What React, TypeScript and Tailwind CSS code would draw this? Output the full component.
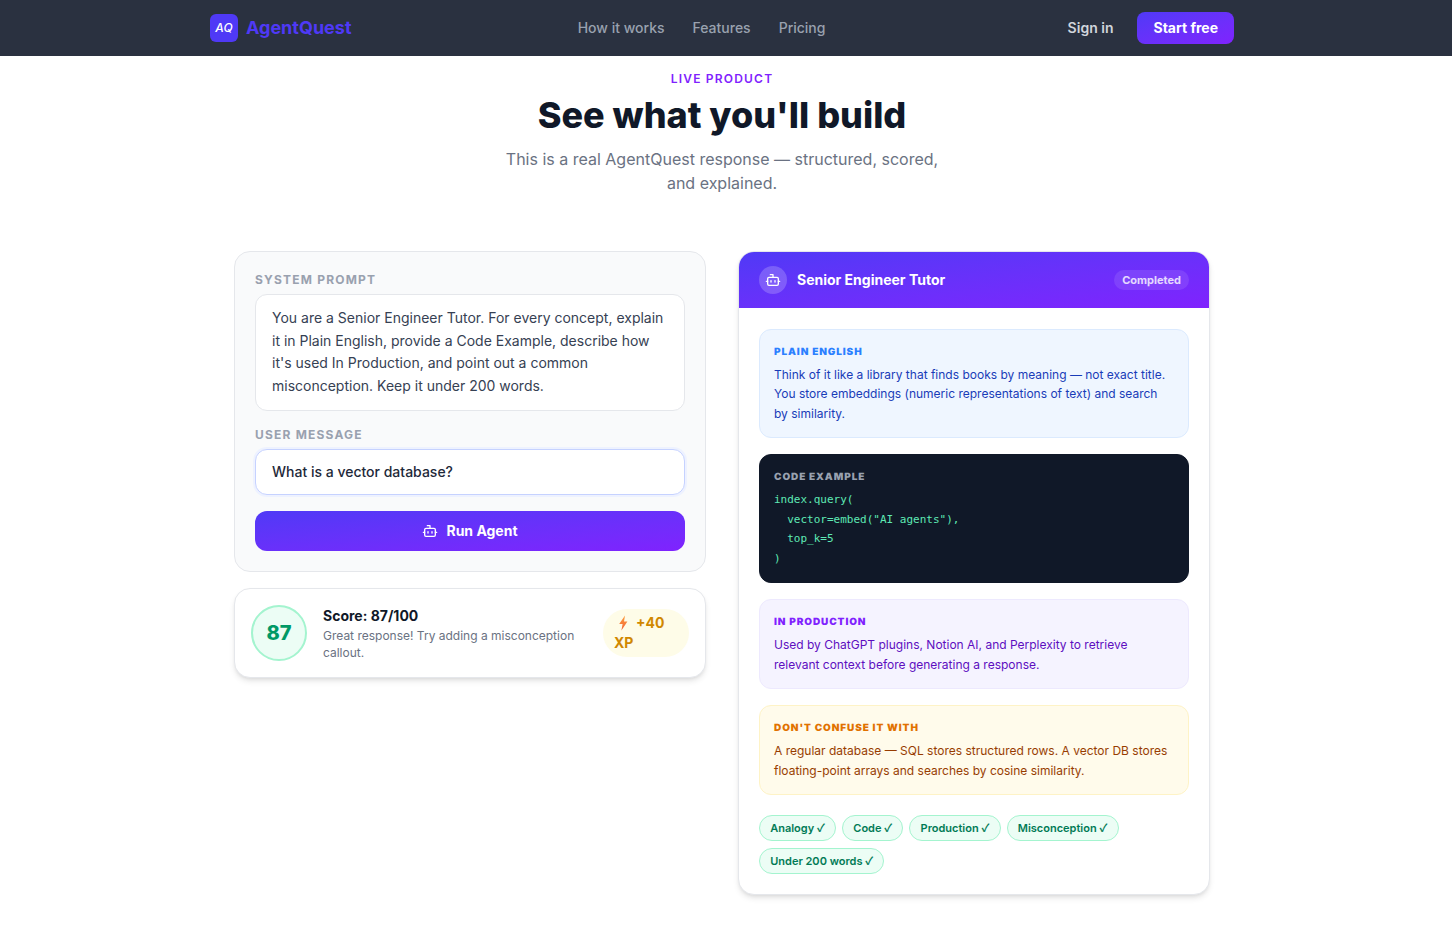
import { Bot } from "lucide-react";

const navLinks = ["How it works", "Features", "Pricing"];
const checks = ["Analogy", "Code", "Production", "Misconception", "Under 200 words"];

function Bolt() {
  return (
    <svg width="14" height="16" viewBox="0 0 14 16" aria-hidden>
      <defs>
        <linearGradient id="bolt" x1="0" y1="0" x2="0" y2="1">
          <stop offset="0" stopColor="#fb9f3c" />
          <stop offset="1" stopColor="#f4633a" />
        </linearGradient>
      </defs>
      <path d="M9 0.5 3.2 9h3.4L5.4 15.5l6-9H8z" fill="url(#bolt)" />
    </svg>
  );
}

export default function App() {
  return (
    <div className="min-h-[952px] bg-white pb-[57px] font-['Inter',sans-serif] text-gray-900">
      <header className="h-14 bg-[#2a3140] pr-2">
        <div className="mx-auto flex h-14 max-w-5xl items-center justify-between">
          <div className="flex items-center gap-2">
            <span className="flex size-7 items-center justify-center rounded-md bg-indigo-600 text-xs font-medium italic text-white">
              AQ
            </span>
            <span className="text-lg font-bold text-indigo-600">AgentQuest</span>
          </div>
          <nav className="flex items-center gap-7 pr-4 text-sm font-medium text-gray-400">
            {navLinks.map((link) => (
              <span key={link}>{link}</span>
            ))}
          </nav>
          <div className="flex items-center gap-6">
            <span className="text-sm font-semibold text-gray-300">Sign in</span>
            <button className="h-8 rounded-lg bg-gradient-to-br from-indigo-600 to-violet-600 px-4 text-sm font-bold text-white">
              Start free
            </button>
          </div>
        </div>
      </header>

      <div className="pr-2">
        <main className="mx-auto max-w-[976px]">
          <section className="pt-[15px] text-center">
            <p className="text-xs font-semibold tracking-widest text-violet-600">LIVE PRODUCT</p>
            <h2 className="mt-2 text-4xl font-extrabold text-gray-900">See what you'll build</h2>
            <p className="mx-auto mt-3 max-w-md text-base text-gray-500">
              This is a real AgentQuest response — structured, scored, and explained.
            </p>
          </section>

          <section className="mt-14 grid grid-cols-2 items-start gap-8">
            <div className="grid gap-4">
              <div className="rounded-2xl border border-gray-200 bg-gray-50 p-5">
                <p className="text-xs font-bold tracking-widest text-gray-400">SYSTEM PROMPT</p>
                <div className="mt-1.5 rounded-xl border border-gray-200 bg-white px-4 pt-[11.8px] pb-[12.2px] text-sm leading-relaxed text-gray-700">
                  You are a Senior Engineer Tutor. For every concept, explain it in Plain English, provide a Code
                  Example, describe how it's used In Production, and point out a common misconception. Keep it under 200
                  words.
                </div>
                <p className="mt-4 text-xs font-bold tracking-widest text-gray-400">USER MESSAGE</p>
                <div className="mt-1.5 rounded-xl border border-indigo-200 bg-white px-4 py-3 text-sm font-medium leading-5 text-gray-800 shadow-[0_0_0_2px_#eef2ff]">
                  What is a vector database?
                </div>
                <button className="mt-4 flex h-10 w-full items-center justify-center gap-2 rounded-xl bg-gradient-to-br from-indigo-600 to-violet-600 text-sm font-bold text-white">
                  <Bot size={16} aria-hidden />
                  Run Agent
                </button>
              </div>

              <div className="flex items-center gap-4 rounded-2xl border border-gray-200 bg-white p-4 shadow-md">
                <div className="flex size-14 shrink-0 items-center justify-center rounded-full border-2 border-emerald-200 bg-emerald-50 text-xl font-extrabold text-emerald-600">
                  87
                </div>
                <div className="min-w-0 flex-1 pt-px">
                  <p className="text-sm font-bold text-gray-900">Score: 87/100</p>
                  <p className="mt-[2.3px] text-xs leading-snug text-gray-500">
                    Great response! Try adding a misconception callout.
                  </p>
                </div>
                <div className="w-[86px] shrink-0 rounded-full bg-yellow-50 px-[11px] py-1 text-sm font-bold leading-5 text-yellow-600">
                  <span className="inline-flex h-5 items-center gap-1.5 pl-0.5 align-top">
                    <Bolt />
                    +40
                  </span>{" "}
                  XP
                </div>
              </div>
            </div>

            <div className="overflow-hidden rounded-2xl border border-gray-200 bg-white shadow-md">
              <div className="flex h-14 items-center justify-between bg-gradient-to-br from-indigo-600 to-violet-600 px-5">
                <div className="flex items-center gap-2.5">
                  <span className="flex size-7 items-center justify-center rounded-full bg-white/20 text-white">
                    <Bot size={16} aria-hidden />
                  </span>
                  <span className="text-sm font-bold text-white">Senior Engineer Tutor</span>
                </div>
                <span className="rounded-full bg-white/10 px-2 py-0.5 text-[11px] font-bold text-white/80">
                  Completed
                </span>
              </div>

              <div className="grid gap-4 px-5 pt-[21px] pb-5">
                <div className="rounded-xl border border-blue-100 bg-blue-50 px-3.5 pt-[15px] pb-[13.8px]">
                  <p className="text-[10px] font-black tracking-[0.09em] text-blue-500 [text-rendering:geometricPrecision]">
                    PLAIN ENGLISH
                  </p>
                  <p className="mt-[4.7px] text-xs leading-relaxed text-blue-800">
                    Think of it like a library that finds books by meaning — not exact title. You store embeddings
                    (numeric representations of text) and search by similarity.
                  </p>
                </div>

                <div className="rounded-xl border border-gray-900 bg-gray-900 px-3.5 pt-[15px] pb-[12.65px]">
                  <p className="text-[10px] font-black tracking-[0.09em] text-gray-400 [text-rendering:geometricPrecision]">
                    CODE EXAMPLE
                  </p>
                  <pre className="mt-[4.85px] font-['DejaVu_Sans_Mono',monospace] text-[11px] leading-[1.8] text-emerald-300">
                    {'index.query(\n  vector=embed("AI agents"),\n  top_k=5\n)'}
                  </pre>
                </div>

                <div className="rounded-xl border border-violet-100 bg-violet-50 px-3.5 pt-[15px] pb-[13.6px]">
                  <p className="text-[10px] font-black tracking-[0.09em] text-violet-600 [text-rendering:geometricPrecision]">
                    IN PRODUCTION
                  </p>
                  <p className="mt-[5.4px] text-xs leading-relaxed text-violet-800">
                    Used by ChatGPT plugins, Notion AI, and Perplexity to retrieve relevant context before generating a
                    response.
                  </p>
                </div>

                <div className="rounded-xl border border-amber-100 bg-amber-50 px-3.5 pt-[15px] pb-[13.6px]">
                  <p className="text-[10px] font-black tracking-[0.09em] text-amber-600 [text-rendering:geometricPrecision]">
                    DON'T CONFUSE IT WITH
                  </p>
                  <p className="mt-[5.4px] text-xs leading-relaxed text-amber-800">
                    A regular database — SQL stores structured rows. A vector DB stores floating-point arrays and
                    searches by cosine similarity.
                  </p>
                </div>

                <div className="flex flex-wrap gap-x-1.5 gap-y-[7px] pt-1">
                  {checks.map((item) => (
                    <span
                      key={item}
                      className="h-[26px] rounded-full border border-emerald-200 bg-emerald-50 px-[10.2px] pt-[3px] pb-[5px] text-[11px] font-semibold leading-4 text-emerald-700"
                    >
                      {item} <span className="font-['Noto_Sans_CJK_JP',sans-serif] leading-4">✓</span>
                    </span>
                  ))}
                </div>
              </div>
            </div>
          </section>
        </main>
      </div>
    </div>
  );
}
